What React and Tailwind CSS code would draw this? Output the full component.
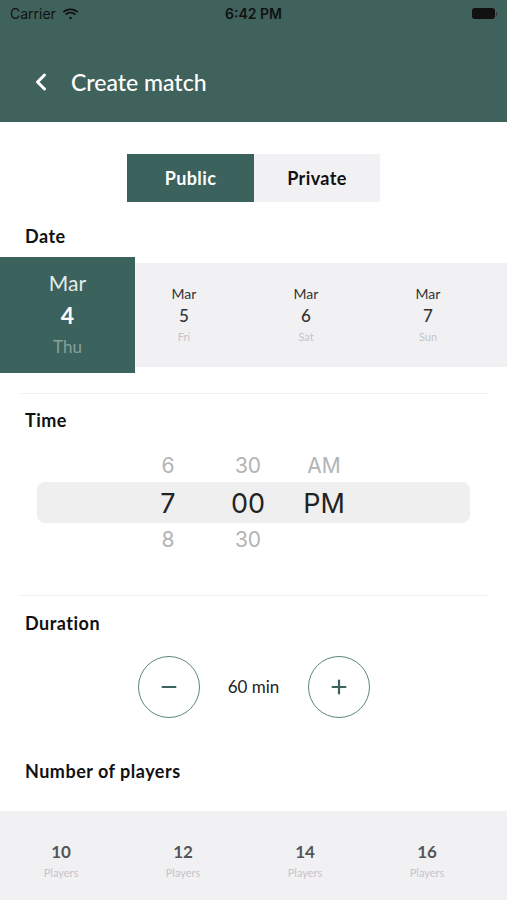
import { ChevronLeft, Minus, Plus } from "lucide-react";

const days = [
    { month: "Mar", day: "5", name: "Fri" },
    { month: "Mar", day: "6", name: "Sat" },
    { month: "Mar", day: "7", name: "Sun" },
];

const players = ["10", "12", "14", "16"];

function StatusBar() {
    return (
        <div className="flex h-[27px] items-center justify-between px-[10px] text-[14px] text-[#111] font-['Inter',sans-serif]">
            <div className="flex w-[120px] items-center gap-[6px]">
                <span>Carrier</span>
                <svg width="17" height="12" viewBox="0 0 17 12" fill="#111">
                    <path d="M8.5 2.2c2.5 0 4.8 1 6.5 2.6l1.3-1.3C14.2 1.5 11.5.4 8.5.4S2.8 1.5.7 3.5L2 4.8c1.7-1.6 4-2.6 6.5-2.6z" />
                    <path d="M8.5 5.6c1.6 0 3 .6 4.1 1.6l1.3-1.3C12.5 4.6 10.6 3.8 8.5 3.8S4.5 4.6 3.1 5.9l1.3 1.3c1.1-1 2.5-1.6 4.1-1.6z" />
                    <path d="M8.5 9c.7 0 1.3.2 1.8.7L8.5 11.6 6.7 9.7c.5-.5 1.1-.7 1.8-.7z" />
                </svg>
            </div>
            <span className="font-semibold">6:42 PM</span>
            <div className="flex w-[120px] justify-end">
                <div className="flex items-center">
                    <div className="h-[11px] w-[23px] rounded-[3px] bg-[#111]" />
                    <div className="ml-[1px] h-[4px] w-[1.5px] rounded-r bg-[#333]" />
                </div>
            </div>
        </div>
    );
}

export default function App() {
    return (
        <div className="h-[900px] w-[507px] overflow-hidden bg-white font-['Lato',sans-serif]">

            <div className="h-[122px] bg-[#40625c]">
                <StatusBar />
                <div className="mt-[38px] flex items-center pl-[27px]">
                    <ChevronLeft size={28} strokeWidth={2.6} className="text-white" />
                    <h1 className="ml-[16px] text-[23px] font-medium text-white">Create match</h1>
                </div>
            </div>

            <div className="mt-[32px] flex justify-center">
                <button className="h-[48px] w-[127px] bg-[#3b625d] text-[18px] tracking-[0.4px] font-bold text-white">
                    Public
                </button>
                <button className="h-[48px] w-[126px] bg-[#f1f1f4] text-[18px] tracking-[0.4px] font-bold text-[#111]">
                    Private
                </button>
            </div>

            <h2 className="mt-[23px] pl-[25px] text-[18px] tracking-[0.5px] leading-[22px] font-bold text-[#111]">Date</h2>

            <div className="mt-[10px] flex items-center">
                <div className="relative z-10 flex h-[116px] w-[135px] shrink-0 flex-col items-center justify-center bg-[#3b625d]">
                    <span className="text-[21px] leading-[26px] text-[#e4ecea]">Mar</span>
                    <span className="text-[23px] leading-[38px] font-bold text-white">4</span>
                    <span className="text-[17px] leading-[26px] text-[#85a19c]">Thu</span>
                </div>
                <div className="-ml-[12px] flex h-[104px] flex-1 items-center bg-[#f1f1f4]">
                    {days.map((d) => (
                        <div key={d.day} className="flex w-[122px] shrink-0 flex-col items-center">
                            <span className="text-[14px] leading-[20px] text-[#333]">{d.month}</span>
                            <span className="text-[17px] leading-[24px] font-medium text-[#333]">{d.day}</span>
                            <span className="text-[11px] leading-[18px] text-[#c4c4c8]">{d.name}</span>
                        </div>
                    ))}
                </div>
            </div>

            <div className="mx-[20px] mt-[20px] h-px bg-[#f0f0f0]" />

            <h2 className="mt-[15px] pl-[25px] text-[18px] tracking-[0.5px] leading-[22px] font-bold text-[#111]">Time</h2>

            <div className="mt-[18px] font-['Inter',sans-serif]">
                <div className="flex h-[33px] items-center pl-[128px] text-[21px] text-[#b4b4b4]">
                    <span className="w-[80px] text-center">6</span>
                    <span className="w-[80px] text-center">30</span>
                    <span className="w-[72px] text-center">AM</span>
                </div>
                <div className="mx-[37px] flex h-[41px] items-center rounded-lg bg-[#efefef] pt-[3px] pl-[91px] text-[27px] text-[#222]">
                    <span className="w-[80px] text-center">7</span>
                    <span className="w-[80px] text-center">00</span>
                    <span className="w-[72px] text-center">PM</span>
                </div>
                <div className="flex h-[34px] items-center pl-[128px] text-[21px] text-[#b4b4b4]">
                    <span className="w-[80px] text-center">8</span>
                    <span className="w-[80px] text-center">30</span>
                </div>
            </div>

            <div className="mx-[20px] mt-[38px] h-px bg-[#f0f0f0]" />

            <h2 className="mt-[16px] pl-[25px] text-[18px] tracking-[0.5px] leading-[22px] font-bold text-[#111]">Duration</h2>

            <div className="mt-[22px] flex items-center justify-center gap-[24px]">
                <button className="flex h-[62px] w-[62px] items-center justify-center rounded-full border-[1.5px] border-[#5d8580]">
                    <Minus size={22} strokeWidth={2.4} className="text-[#3b625d]" />
                </button>
                <span className="w-[60px] text-center text-[17px] text-[#222]">60 min</span>
                <button className="flex h-[62px] w-[62px] items-center justify-center rounded-full border-[1.5px] border-[#5d8580]">
                    <Plus size={22} strokeWidth={2.4} className="text-[#3b625d]" />
                </button>
            </div>

            <h2 className="mt-[42px] pl-[25px] text-[18px] tracking-[0.5px] leading-[22px] font-bold text-[#111]">Number of players</h2>

            <div className="mt-[29px] flex h-[89px] bg-[#f1f1f4] pt-[30px]">
                {players.map((p) => (
                    <div key={p} className="flex w-[122px] shrink-0 flex-col items-center">
                        <span className="text-[17px] leading-[22px] font-bold text-[#555]">{p}</span>
                        <span className="mt-[3px] text-[11px] leading-[14px] text-[#c4c4c8]">Players</span>
                    </div>
                ))}
            </div>

        </div>
    );
}
